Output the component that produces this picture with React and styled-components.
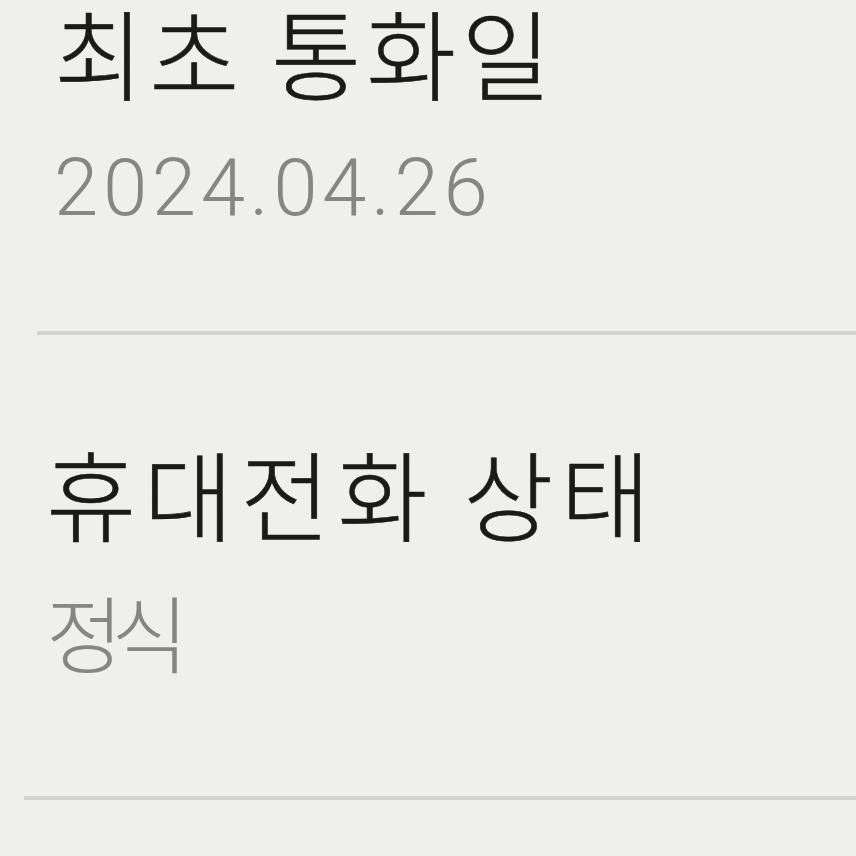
import React from "react";
import styled, { createGlobalStyle } from "styled-components";

const Global = createGlobalStyle`
  html, body { margin: 0; padding: 0; background: #efefeb; }
  body { font-family: "Noto Sans CJK KR", "Noto Sans", sans-serif; }
`;

const Page = styled.div`
  width: 856px;
  height: 856px;
  overflow: hidden;
  background: #efefeb;
  display: flex;
  flex-direction: column;
`;

const Item = styled.section`
  display: flex;
  flex-direction: column;
  padding-left: ${(p) => p.$indent}px;
  padding-top: ${(p) => p.$top}px;
`;

const Title = styled.div`
  font-family: "Noto Sans CJK KR", sans-serif;
  font-size: 98px;
  line-height: 100px;
  height: 100px;
  letter-spacing: ${(p) => p.$spacing}px;
  color: #1a1a18;
  font-weight: 300;
  -webkit-text-stroke: 0.6px #1a1a18;
  white-space: nowrap;
`;

const Value = styled.div`
  margin-top: ${(p) => p.$gap}px;
  font-family: ${(p) =>
    p.$numeric ? `Roboto, "Liberation Sans", sans-serif` : `"Noto Sans CJK KR", sans-serif`};
  font-size: ${(p) => p.$size}px;
  letter-spacing: ${(p) => p.$spacing}px;
  font-weight: 300;
  line-height: 90px;
  height: 90px;
  color: #868684;
  white-space: nowrap;
`;

const Divider = styled.hr`
  border: none;
  height: 4px;
  margin: ${(p) => p.$top}px 0 0 ${(p) => p.$inset}px;
  background: #d2d2ce;
  flex-shrink: 0;
`;

export default function App() {
  return (
    <>
      <Global />
      <Page>
        <Item $indent={54} $top={0}>
          <Title $spacing={5}>최초 통화일</Title>
          <Value $gap={43} $numeric $size={80} $spacing={4.5}>
            2024.04.26
          </Value>
        </Item>
        <Divider $inset={37} $top={98} />
        <Item $indent={46} $top={106}>
          <Title $spacing={7}>휴대전화 상태</Title>
          <Value $gap={45} $size={84} $spacing={-12}>
            정식
          </Value>
        </Item>
        <Divider $inset={24} $top={120} />
      </Page>
    </>
  );
}
